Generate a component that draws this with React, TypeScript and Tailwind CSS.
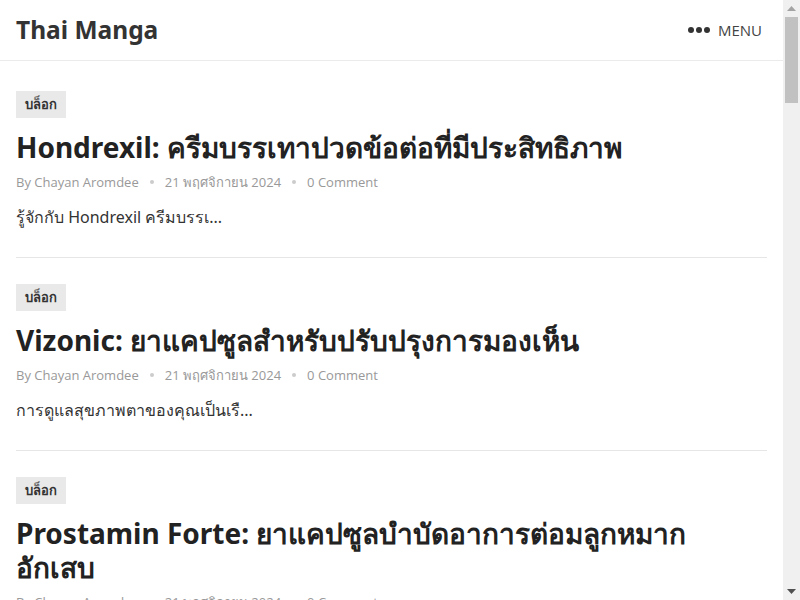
interface Post {
  id: number;
  title: string;
  author: string;
  date: string;
  comments: number;
  excerpt: string;
}

const posts: Post[] = [
  {
    id: 1,
    title: 'Hondrexil: ครีมบรรเทาปวดข้อต่อที่มีประสิทธิภาพ',
    author: 'Chayan Aromdee',
    date: '21 พฤศจิกายน 2024',
    comments: 0,
    excerpt: 'รู้จักกับ Hondrexil ครีมบรรเ...',
  },
  {
    id: 2,
    title: 'Vizonic: ยาแคปซูลสำหรับปรับปรุงการมองเห็น',
    author: 'Chayan Aromdee',
    date: '21 พฤศจิกายน 2024',
    comments: 0,
    excerpt: 'การดูแลสุขภาพตาของคุณเป็นเรื...',
  },
  {
    id: 3,
    title: 'Prostamin Forte: ยาแคปซูลบำบัดอาการต่อมลูกหมากอักเสบ',
    author: 'Chayan Aromdee',
    date: '21 พฤศจิกายน 2024',
    comments: 0,
    excerpt: 'ต่อมลูกหมากอักเสบเป็นปัญหา...',
  },
  {
    id: 4,
    title: 'Cardiol: แคปซูลสำหรับความดันโลหิต',
    author: 'Chayan Aromdee',
    date: '20 พฤศจิกายน 2024',
    comments: 0,
    excerpt: 'ความดันโลหิตสูงเป็นภาวะที่...',
  },
];

// browser-style scrollbar strip seen in the screenshot
const ScrollStrip = () => (
  <aside className="w-[17px] shrink-0 bg-[#f0f0f0] flex flex-col items-center">
    <div className="h-[17px] flex items-center justify-center">
      <svg width="9" height="5" viewBox="0 0 9 5"><path d="M4.5 0 9 5H0z" fill="#a3a3a3" /></svg>
    </div>
    <div className="w-[13px] h-[86px] bg-[#c1c1c1]"></div>
    <div className="flex-1"></div>
    <div className="h-[17px] flex items-center justify-center">
      <svg width="9" height="5" viewBox="0 0 9 5"><path d="M0 0h9L4.5 5z" fill="#505050" /></svg>
    </div>
  </aside>
);

const App = () => {
  return (
    <div className="h-screen flex bg-white text-[#333] font-['Noto_Sans',sans-serif]">
      <div className="flex-1 min-w-0 overflow-hidden">
        {/* Header */}
        <header className="h-[61px] border-b border-[#ebebeb] flex items-center justify-between px-4">
          <h1 className="text-[24.5px] font-bold text-[#333] leading-none">Thai Manga</h1>
          <button className="flex items-center gap-[8px] text-[15px] text-[#444] pr-[5px]">
            <span className="flex items-center gap-[2px]">
              <span className="w-[6px] h-[6px] rounded-full bg-[#333]"></span>
              <span className="w-[6px] h-[6px] rounded-full bg-[#333]"></span>
              <span className="w-[6px] h-[6px] rounded-full bg-[#333]"></span>
            </span>
            <span className="font-['Open_Sans',sans-serif]">MENU</span>
          </button>
        </header>

        {/* Post list */}
        <main className="px-4 pt-[30px]">
          {posts.map((post, i) => (
            <article
              key={post.id}
              className={`pb-7 ${i > 0 ? 'pt-[26px]' : ''} border-b border-[#e6e6e6]`}
            >
              <span className="inline-block bg-[#e9e9e9] px-[9px] h-[27px] leading-[27px] text-[13px] font-semibold text-[#333]">
                บล็อก
              </span>
              <h2 className="mt-3 text-[28px] font-bold leading-[34px] text-[#222] max-w-[690px]">
                {post.title}
              </h2>
              <div className="mt-2 flex items-center gap-[11px] text-[13px] leading-5 text-[#999] font-['Open_Sans',sans-serif]">
                <span>By {post.author}</span>
                <span className="w-1 h-1 rounded-full bg-[#ccc]"></span>
                <span>{post.date}</span>
                <span className="w-1 h-1 rounded-full bg-[#ccc]"></span>
                <span>{post.comments} Comment</span>
              </div>
              <p className="mt-[13px] text-[16px] leading-6 text-[#333]">{post.excerpt}</p>
            </article>
          ))}
        </main>
      </div>
      <ScrollStrip />
    </div>
  );
};

export default App;
